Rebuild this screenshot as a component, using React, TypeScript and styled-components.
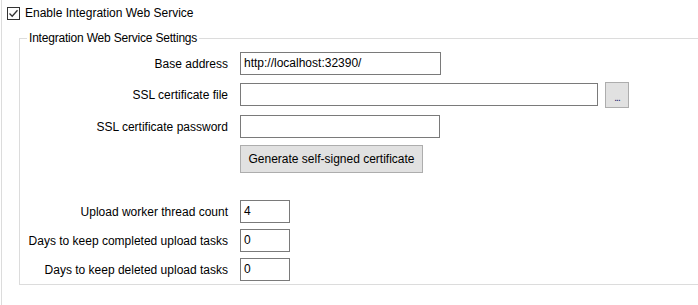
import React from "react";
import styled, {createGlobalStyle} from "styled-components";

const GlobalStyle = createGlobalStyle`
  html, body {
    margin: 0;
    padding: 0;
    background: #ffffff;
    overflow: hidden;
  }
  body {
    font-family: "Liberation Sans", Arial, sans-serif;
    font-size: 12px;
    color: #000000;
  }
`;

const Panel = styled('div')`
  margin-left: 1px;
  border-left: 1px solid #dcdcdc;
  height: 305px;
  box-sizing: border-box;
`;

const CheckRow = styled('label')`
  display: flex;
  align-items: center;
  height: 26px;
  padding-left: 5px;
  gap: 5px;
`;

const CheckBox = styled('span')`
  width: 13px;
  height: 13px;
  box-sizing: border-box;
  border: 1px solid #333333;
  background: #ffffff;
  display: flex;
  align-items: center;
  justify-content: center;
`;

const Group = styled('fieldset')`
  margin: 4px -20px 0 17px;
  padding: 0 0 3px 0;
  border: 1px solid #dcdcdc;
  min-width: 0;
`;

const GroupTitle = styled('legend')`
  margin-left: 7px;
  padding: 0 2px;
  line-height: 16px;
  letter-spacing: -0.2px;
`;

const Row = styled('div')<{ $top: number; $height?: number }>`
  display: flex;
  align-items: center;
  margin-top: ${p => p.$top}px;
  height: ${p => p.$height ?? 23}px;
`;

const Label = styled('span')`
  width: 208px;
  margin-right: 12px;
  text-align: right;
  white-space: nowrap;
`;

const TextBox = styled('div')<{ $width: number }>`
  width: ${p => p.$width}px;
  height: 23px;
  box-sizing: border-box;
  border: 1px solid #7a7a7a;
  background: #ffffff;
  padding: 0 3px;
  line-height: 21px;
  white-space: nowrap;
  overflow: hidden;
`;

const Button = styled('button')<{ $width: number; $height: number }>`
  width: ${p => p.$width}px;
  height: ${p => p.$height}px;
  box-sizing: border-box;
  border: 1px solid #adadad;
  background: #e1e1e1;
  font-family: inherit;
  font-size: 12px;
  color: #000000;
  padding: 0;
  margin: 0;
`;

const BrowseButton = styled(Button)`
  margin-left: 7px;
  font-size: 10px;
  line-height: 30px;
  color: #1a1a6a;
  letter-spacing: -1px;
`;

export default function App() {
  return (
    <Panel>
      <GlobalStyle/>
      <CheckRow>
        <CheckBox>
          <svg width="11" height="11" viewBox="0 0 11 11">
            <path d="M1.5 5.5 L4.2 8.2 L9.5 2.2" fill="none" stroke="#333" strokeWidth="1.3"/>
          </svg>
        </CheckBox>
        Enable Integration Web Service
      </CheckRow>
      <Group>
        <GroupTitle>Integration Web Service Settings</GroupTitle>
        <Row $top={6}>
          <Label>Base address</Label>
          <TextBox $width={201}>http://localhost:32390/</TextBox>
        </Row>
        <Row $top={8}>
          <Label>SSL certificate file</Label>
          <TextBox $width={358}/>
          <BrowseButton $width={24} $height={26}>...</BrowseButton>
        </Row>
        <Row $top={9}>
          <Label>SSL certificate password</Label>
          <TextBox $width={200}/>
        </Row>
        <Row $top={7} $height={28}>
          <Label/>
          <Button $width={183} $height={28}>Generate self-signed certificate</Button>
        </Row>
        <Row $top={27}>
          <Label>Upload worker thread count</Label>
          <TextBox $width={50}>4</TextBox>
        </Row>
        <Row $top={6}>
          <Label>Days to keep completed upload tasks</Label>
          <TextBox $width={50}>0</TextBox>
        </Row>
        <Row $top={6}>
          <Label>Days to keep deleted upload tasks</Label>
          <TextBox $width={50}>0</TextBox>
        </Row>
      </Group>
    </Panel>
  );
}
